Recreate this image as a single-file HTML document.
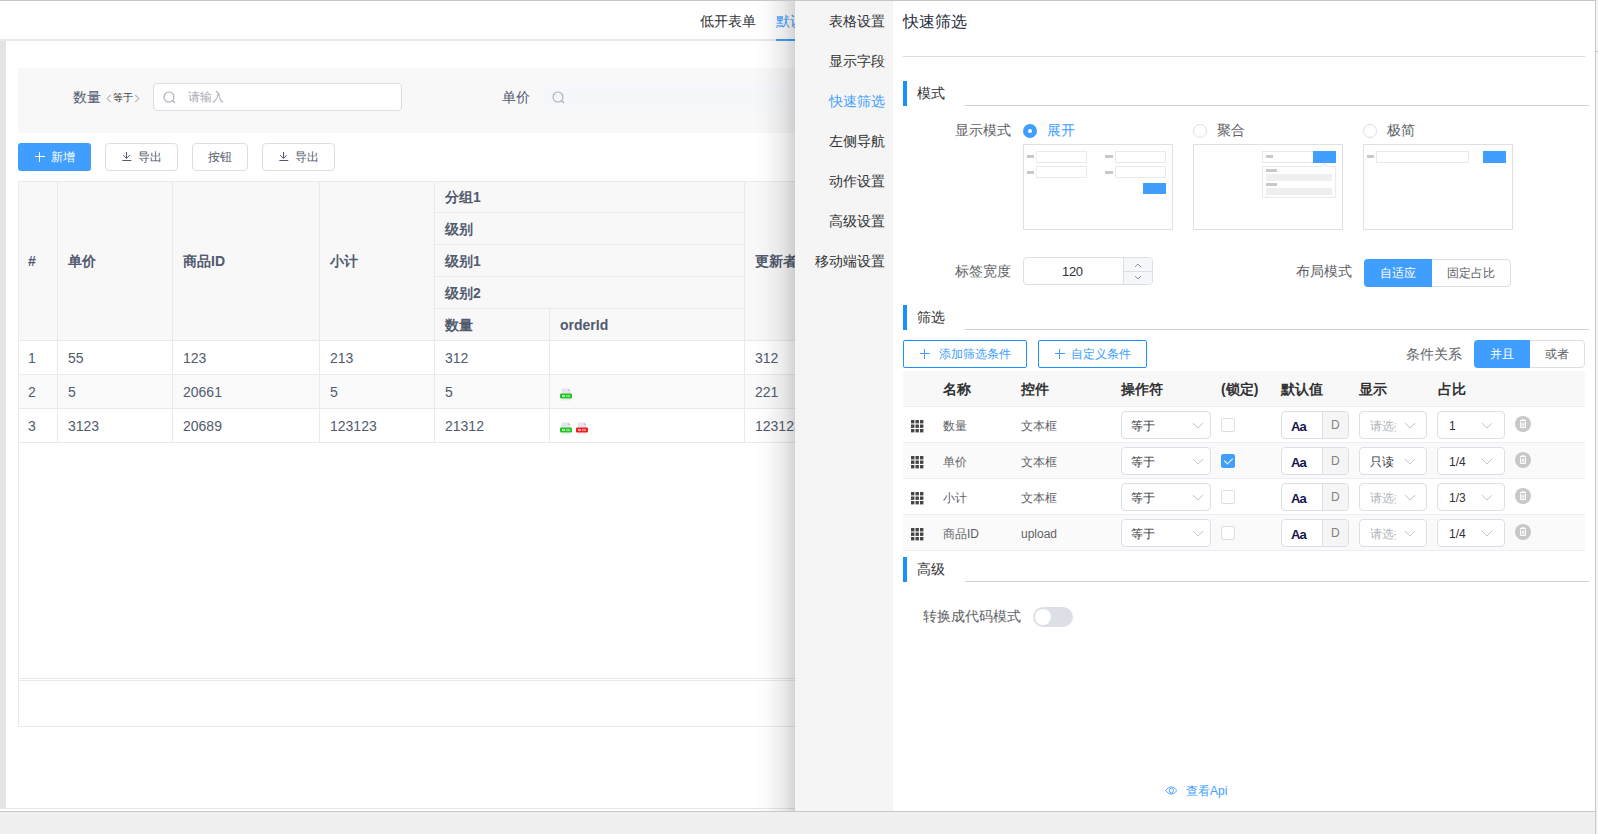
<!DOCTYPE html>
<html><head><meta charset="utf-8">
<style>
*{box-sizing:border-box;margin:0;padding:0}
html,body{width:1598px;height:834px;overflow:hidden;background:#fff;font-family:"Liberation Sans",sans-serif;color:#606266}
.a{position:absolute;white-space:nowrap}
.t{position:absolute;white-space:nowrap;line-height:20px}
/* left page */
.th{font-weight:bold;color:#515a6e;font-size:14px}
.td{color:#515a6e;font-size:14px}
.vl{position:absolute;width:1px;background:#e8eaec}
.hl{position:absolute;height:1px;background:#e8eaec}
.btn{position:absolute;height:28px;border:1px solid #dcdee2;border-radius:4px;background:#fff;font-size:12px;color:#515a6e}
.th2{font-weight:bold;color:#303133;font-size:14px}
.grip{width:12px;height:12px;display:grid;grid-template-columns:repeat(3,3px);grid-template-rows:repeat(3,3px);gap:1.5px}
.grip i{display:block;background:#444;width:3px;height:3px}
.sel{height:28px;border:1px solid #dcdfe6;border-radius:4px;background:#fff}
.cb{width:14px;height:14px;border:1px solid #dcdfe6;border-radius:2px;background:#fff}
.cb.on{background:#409eff;border-color:#409eff}
.cb.on::after{content:"";position:absolute;left:3.5px;top:1px;width:4px;height:7px;border:solid #fff;border-width:0 1.5px 1.5px 0;transform:rotate(45deg)}
.aa{font-size:13px;font-weight:bold;color:#141450;letter-spacing:-0.8px}
</style></head><body>
<div id="page">
  <!-- window top border -->
  <div class="a" style="left:0;top:0;width:1598px;height:1px;background:#c6c6c6"></div>
  <!-- tabs -->
  <div class="t" style="left:700px;top:11px;font-size:14px;color:#303133">低开表单</div>
  <div class="t" style="left:776px;top:11px;font-size:14px;color:#409eff">默认</div>
  <div class="a" style="left:0;top:39px;width:395px;height:2px;background:#ece8e8"></div>
  <div class="a" style="left:395px;top:39px;width:400px;height:2px;background:#e4e7ed"></div>
  <div class="a" style="left:776px;top:39px;width:20px;height:2px;background:#409eff"></div>
  <div class="a" style="left:0;top:41px;width:6px;height:767px;background:#e4e4e4"></div>

  <!-- search area -->
  <div class="a" style="left:18px;top:68px;width:780px;height:65px;background:#f8f8f9"></div>
  <div class="t" style="left:73px;top:87px;font-size:14px;color:#515a6e">数量</div>
  <svg class="a" style="left:106px;top:94px" width="6" height="9" viewBox="0 0 6 9"><path d="M4.8 0.8 L1.2 4.5 L4.8 8.2" fill="none" stroke="#888" stroke-width="0.9"/></svg>
  <div class="t" style="left:113px;top:88px;font-size:10px;line-height:20px;color:#333">等于</div>
  <svg class="a" style="left:134px;top:94px" width="6" height="9" viewBox="0 0 6 9"><path d="M1.2 0.8 L4.8 4.5 L1.2 8.2" fill="none" stroke="#888" stroke-width="0.9"/></svg>
  <div class="a" style="left:153px;top:83px;width:249px;height:28px;border:1px solid #dcdee2;border-radius:4px;background:#fff"></div>
  <svg class="a" style="left:163px;top:91px" width="13" height="13" viewBox="0 0 13 13"><circle cx="6" cy="6" r="5" fill="none" stroke="#a8abb2" stroke-width="1.1"/><path d="M9.6 9.6 L12 12" stroke="#a8abb2" stroke-width="1.1"/></svg>
  <div class="t" style="left:188px;top:87px;font-size:12px;color:#a8abb2">请输入</div>
  <div class="t" style="left:502px;top:87px;font-size:14px;color:#515a6e">单价</div>
  <div class="a" style="left:542px;top:83px;width:260px;height:28px;border-radius:4px;background:#f5f7fa"></div>
  <svg class="a" style="left:552px;top:91px" width="13" height="13" viewBox="0 0 13 13"><circle cx="6" cy="6" r="5" fill="none" stroke="#a8abb2" stroke-width="1.1"/><path d="M9.6 9.6 L12 12" stroke="#a8abb2" stroke-width="1.1"/></svg>

  <!-- buttons -->
  <div class="a" style="left:18px;top:143px;width:73px;height:28px;border-radius:3px;background:#409eff"></div>
  <svg class="a" style="left:35px;top:152px" width="10" height="10" viewBox="0 0 10 10"><path d="M4.5 0 V10 M0 4.5 H10" stroke="#fff" stroke-width="1"/></svg>
  <div class="t" style="left:51px;top:147px;font-size:12px;color:#fff">新增</div>
  <div class="btn" style="left:105px;top:143px;width:73px"></div>
  <svg class="a" style="left:122px;top:151px" width="10" height="11" viewBox="0 0 10 11"><path d="M4.5 1 V7.3 M1.3 4.2 L4.5 7.4 L7.7 4.2 M0.3 9.5 H9.3" fill="none" stroke="#515a6e" stroke-width="1"/></svg>
  <div class="t" style="left:138px;top:147px;font-size:12px;color:#515a6e">导出</div>
  <div class="btn" style="left:192px;top:143px;width:56px"></div>
  <div class="t" style="left:208px;top:147px;font-size:12px;color:#515a6e">按钮</div>
  <div class="btn" style="left:262px;top:143px;width:73px"></div>
  <svg class="a" style="left:279px;top:151px" width="10" height="11" viewBox="0 0 10 11"><path d="M4.5 1 V7.3 M1.3 4.2 L4.5 7.4 L7.7 4.2 M0.3 9.5 H9.3" fill="none" stroke="#515a6e" stroke-width="1"/></svg>
  <div class="t" style="left:295px;top:147px;font-size:12px;color:#515a6e">导出</div>

  <!-- table -->
  <div class="a" style="left:18px;top:181px;width:780px;height:160px;background:#f8f8f9"></div>
  <div class="a" style="left:18px;top:341px;width:780px;height:34px;background:#fff"></div>
  <div class="a" style="left:18px;top:375px;width:780px;height:34px;background:#fafafa"></div>
  <div class="hl" style="left:18px;top:181px;width:780px"></div>
  <div class="hl" style="left:434px;top:212px;width:310px"></div>
  <div class="hl" style="left:434px;top:244px;width:310px"></div>
  <div class="hl" style="left:434px;top:276px;width:310px"></div>
  <div class="hl" style="left:434px;top:308px;width:310px"></div>
  <div class="hl" style="left:18px;top:340px;width:780px"></div>
  <div class="hl" style="left:18px;top:374px;width:780px"></div>
  <div class="hl" style="left:18px;top:408px;width:780px"></div>
  <div class="hl" style="left:18px;top:442px;width:780px"></div>
  <div class="hl" style="left:18px;top:678px;width:780px"></div>
  <div class="hl" style="left:18px;top:680px;width:780px"></div>
  <div class="hl" style="left:18px;top:726px;width:780px"></div>
  <div class="vl" style="left:18px;top:181px;height:546px"></div>
  <div class="vl" style="left:57px;top:181px;height:262px"></div>
  <div class="vl" style="left:172px;top:181px;height:262px"></div>
  <div class="vl" style="left:319px;top:181px;height:262px"></div>
  <div class="vl" style="left:434px;top:181px;height:262px"></div>
  <div class="vl" style="left:549px;top:308px;height:135px"></div>
  <div class="vl" style="left:744px;top:181px;height:262px"></div>

  <div class="t th" style="left:28px;top:251px">#</div>
  <div class="t th" style="left:68px;top:251px">单价</div>
  <div class="t th" style="left:183px;top:251px">商品ID</div>
  <div class="t th" style="left:330px;top:251px">小计</div>
  <div class="t th" style="left:445px;top:187px">分组1</div>
  <div class="t th" style="left:445px;top:219px">级别</div>
  <div class="t th" style="left:445px;top:251px">级别1</div>
  <div class="t th" style="left:445px;top:283px">级别2</div>
  <div class="t th" style="left:445px;top:315px">数量</div>
  <div class="t th" style="left:560px;top:315px">orderId</div>
  <div class="t th" style="left:755px;top:251px">更新者</div>

  <div class="t td" style="left:28px;top:348px">1</div>
  <div class="t td" style="left:68px;top:348px">55</div>
  <div class="t td" style="left:183px;top:348px">123</div>
  <div class="t td" style="left:330px;top:348px">213</div>
  <div class="t td" style="left:445px;top:348px">312</div>
  <div class="t td" style="left:755px;top:348px">312</div>
  <div class="t td" style="left:28px;top:382px">2</div>
  <div class="t td" style="left:68px;top:382px">5</div>
  <div class="t td" style="left:183px;top:382px">20661</div>
  <div class="t td" style="left:330px;top:382px">5</div>
  <div class="t td" style="left:445px;top:382px">5</div>
  <div class="t td" style="left:755px;top:382px">221</div>
  <div class="t td" style="left:28px;top:416px">3</div>
  <div class="t td" style="left:68px;top:416px">3123</div>
  <div class="t td" style="left:183px;top:416px">20689</div>
  <div class="t td" style="left:330px;top:416px">123123</div>
  <div class="t td" style="left:445px;top:416px">21312</div>
  <div class="t td" style="left:755px;top:416px">123123</div>


  <svg class="a" style="left:560px;top:388px" width="12" height="13" viewBox="0 0 12 13"><path d="M1.5 0.5 H8 L10.5 3 V6 H1.5 Z" fill="#e4e5ec"/><path d="M8 0.5 L10.5 3 H8 Z" fill="#c5c6d0"/><rect x="0" y="5.5" width="12" height="5" rx="1" fill="#25c425"/><path d="M2.2 8 H5 M6.2 8 H7.5 M8.3 8 H9.8" stroke="#fff" stroke-width="1.3" opacity="0.85"/><path d="M1.5 11.8 H10.5" stroke="#dcdde5" stroke-width="0.8"/></svg>
  <svg class="a" style="left:560px;top:422px" width="12" height="13" viewBox="0 0 12 13"><path d="M1.5 0.5 H8 L10.5 3 V6 H1.5 Z" fill="#e4e5ec"/><path d="M8 0.5 L10.5 3 H8 Z" fill="#c5c6d0"/><rect x="0" y="5.5" width="12" height="5" rx="1" fill="#25c425"/><path d="M2.2 8 H5 M6.2 8 H7.5 M8.3 8 H9.8" stroke="#fff" stroke-width="1.3" opacity="0.85"/><path d="M1.5 11.8 H10.5" stroke="#dcdde5" stroke-width="0.8"/></svg>
  <svg class="a" style="left:576px;top:422px" width="12" height="13" viewBox="0 0 12 13"><path d="M1.5 0.5 H8 L10.5 3 V6 H1.5 Z" fill="#e4e5ec"/><path d="M8 0.5 L10.5 3 H8 Z" fill="#c5c6d0"/><rect x="0" y="5.5" width="12" height="5" rx="1" fill="#f01e1e"/><path d="M2.2 8 H5 M6.2 8 H7.5 M8.3 8 H9.8" stroke="#fff" stroke-width="1.3" opacity="0.85"/><path d="M1.5 11.8 H10.5" stroke="#dcdde5" stroke-width="0.8"/></svg>
  <!-- bottom -->
  <div class="a" style="left:0;top:808px;width:1598px;height:1px;background:#e6e6e6"></div>
  <div class="a" style="left:0;top:811px;width:1598px;height:1px;background:#c8c8c8"></div>
  <div class="a" style="left:0;top:812px;width:1598px;height:22px;background:#f0f0f0"></div>
</div>

<!-- DRAWER -->
<div id="drawer">
  <div class="a" style="left:755px;top:1px;width:40px;height:810px;background:linear-gradient(to right,rgba(0,0,0,0),rgba(0,0,0,0.02) 30%,rgba(0,0,0,0.08) 70%,rgba(0,0,0,0.17))"></div>
  <div class="a" style="left:795px;top:1px;width:98px;height:810px;background:#f5f5f5"></div>
  <div class="a" style="left:893px;top:1px;width:702px;height:810px;background:#fff"></div>
  <div class="a" style="left:1595px;top:0;width:1px;height:834px;background:#c8c8c8"></div>
  <div class="a" style="left:1596px;top:0;width:2px;height:834px;background:#f3f3f3"></div>
  <div class="a" style="left:1596px;top:51px;width:2px;height:1px;background:#c8c8c8"></div>
  <!-- nav -->
  <div class="t" style="left:829px;top:11px;font-size:14px;color:#303133">表格设置</div>
  <div class="t" style="left:829px;top:51px;font-size:14px;color:#303133">显示字段</div>
  <div class="t" style="left:829px;top:91px;font-size:14px;color:#409eff">快速筛选</div>
  <div class="t" style="left:829px;top:131px;font-size:14px;color:#303133">左侧导航</div>
  <div class="t" style="left:829px;top:171px;font-size:14px;color:#303133">动作设置</div>
  <div class="t" style="left:829px;top:211px;font-size:14px;color:#303133">高级设置</div>
  <div class="t" style="left:815px;top:251px;font-size:14px;color:#303133">移动端设置</div>
  <!-- title -->
  <div class="t" style="left:903px;top:11px;font-size:16px;line-height:22px;color:#1f2d3d">快速筛选</div>
  <div class="a" style="left:903px;top:56px;width:682px;height:1px;background:#dcdfe6"></div>
  <!-- section mode -->
  <div class="a" style="left:903px;top:81px;width:4px;height:25px;background:#1890ff"></div>
  <div class="t" style="left:917px;top:83px;font-size:14px;color:#303133">模式</div>
  <div class="a" style="left:965px;top:105px;width:624px;height:1px;background:#d0d0d0"></div>
  <div class="t" style="left:955px;top:120px;font-size:14px;color:#606266">显示模式</div>
  <!-- radios -->
  <div class="a" style="left:1023px;top:124px;width:14px;height:14px;border-radius:50%;background:#409eff"></div>
  <div class="a" style="left:1028px;top:129px;width:4px;height:4px;border-radius:50%;background:#fff"></div>
  <div class="t" style="left:1047px;top:120px;font-size:14px;color:#409eff">展开</div>
  <div class="a" style="left:1193px;top:124px;width:14px;height:14px;border-radius:50%;border:1px solid #dcdfe6;background:#fff"></div>
  <div class="t" style="left:1217px;top:120px;font-size:14px;color:#606266">聚合</div>
  <div class="a" style="left:1363px;top:124px;width:14px;height:14px;border-radius:50%;border:1px solid #dcdfe6;background:#fff"></div>
  <div class="t" style="left:1387px;top:120px;font-size:14px;color:#606266">极简</div>
  <!-- card1 -->
  <div class="a" style="left:1023px;top:144px;width:150px;height:86px;border:1px solid #e0e0e0;background:#fff"></div>
  <div class="a" style="left:1027px;top:155px;width:7px;height:3px;background:#c8c8c8"></div>
  <div class="a" style="left:1036px;top:151px;width:51px;height:12px;border:1px solid #eaeaea"></div>
  <div class="a" style="left:1027px;top:171px;width:7px;height:3px;background:#c8c8c8"></div>
  <div class="a" style="left:1036px;top:166px;width:51px;height:12px;border:1px solid #eaeaea"></div>
  <div class="a" style="left:1105px;top:155px;width:8px;height:3px;background:#c8c8c8"></div>
  <div class="a" style="left:1115px;top:151px;width:51px;height:12px;border:1px solid #eaeaea"></div>
  <div class="a" style="left:1105px;top:171px;width:8px;height:3px;background:#c8c8c8"></div>
  <div class="a" style="left:1115px;top:166px;width:51px;height:12px;border:1px solid #eaeaea"></div>
  <div class="a" style="left:1143px;top:183px;width:23px;height:11px;background:#409eff"></div>
  <!-- card2 -->
  <div class="a" style="left:1193px;top:144px;width:150px;height:86px;border:1px solid #e0e0e0;background:#fff"></div>
  <div class="a" style="left:1262px;top:151px;width:74px;height:12px;border:1px solid #eaeaea"></div>
  <div class="a" style="left:1266px;top:155px;width:7px;height:3px;background:#c8c8c8"></div>
  <div class="a" style="left:1313px;top:151px;width:23px;height:12px;background:#409eff"></div>
  <div class="a" style="left:1262px;top:166px;width:74px;height:32px;border:1px solid #eaeaea"></div>
  <div class="a" style="left:1322px;top:164px;width:5px;height:5px;border-left:1px solid #eaeaea;border-top:1px solid #eaeaea;background:#fff;transform:rotate(45deg)"></div>
  <div class="a" style="left:1266px;top:169px;width:11px;height:3px;background:#c8c8c8"></div>
  <div class="a" style="left:1266px;top:174px;width:66px;height:7px;background:#efefef"></div>
  <div class="a" style="left:1266px;top:183px;width:11px;height:3px;background:#c8c8c8"></div>
  <div class="a" style="left:1266px;top:188px;width:66px;height:7px;background:#efefef"></div>
  <!-- card3 -->
  <div class="a" style="left:1363px;top:144px;width:150px;height:86px;border:1px solid #e0e0e0;background:#fff"></div>
  <div class="a" style="left:1367px;top:155px;width:7px;height:3px;background:#c8c8c8"></div>
  <div class="a" style="left:1376px;top:151px;width:93px;height:12px;border:1px solid #eaeaea"></div>
  <div class="a" style="left:1483px;top:151px;width:23px;height:12px;background:#409eff"></div>

  <!-- label width -->
  <div class="t" style="left:955px;top:261px;font-size:14px;color:#606266">标签宽度</div>
  <div class="a" style="left:1023px;top:257px;width:130px;height:28px;border:1px solid #dcdfe6;border-radius:4px;background:#fff"></div>
  <div class="a" style="left:1123px;top:258px;width:29px;height:26px;border-left:1px solid #dcdfe6;background:#f5f7fa;border-radius:0 3px 3px 0"></div>
  <div class="a" style="left:1124px;top:271px;width:28px;height:1px;background:#dcdfe6"></div>
  <div class="t" style="left:1062px;top:262px;font-size:13px;color:#303133;letter-spacing:-0.3px">120</div>
  <svg class="a" style="left:1133px;top:261px" width="10" height="20" viewBox="0 0 10 20"><path d="M2 6 L5 3 L8 6" fill="none" stroke="#909399" stroke-width="1"/><path d="M2 15 L5 18 L8 15" fill="none" stroke="#909399" stroke-width="1"/></svg>
  <!-- layout mode -->
  <div class="t" style="left:1296px;top:261px;font-size:14px;color:#606266">布局模式</div>
  <div class="a" style="left:1364px;top:259px;width:147px;height:28px;border:1px solid #dcdfe6;border-radius:4px;background:#fff"></div>
  <div class="a" style="left:1364px;top:259px;width:68px;height:28px;border-radius:4px 0 0 4px;background:#409eff"></div>
  <div class="t" style="left:1380px;top:263px;font-size:12px;color:#fff">自适应</div>
  <div class="t" style="left:1447px;top:263px;font-size:12px;color:#606266">固定占比</div>

  <!-- section filter -->
  <div class="a" style="left:903px;top:305px;width:4px;height:25px;background:#1890ff"></div>
  <div class="t" style="left:917px;top:307px;font-size:14px;color:#303133">筛选</div>
  <div class="a" style="left:965px;top:329px;width:624px;height:1px;background:#d0d0d0"></div>
  <div class="a" style="left:903px;top:340px;width:124px;height:28px;border:1px solid #1e90ff;border-radius:2px;background:#fff"></div>
  <svg class="a" style="left:920px;top:349px" width="10" height="10" viewBox="0 0 10 10"><path d="M4.5 0 V10 M0 4.5 H10" stroke="#409eff" stroke-width="1"/></svg>
  <div class="t" style="left:939px;top:344px;font-size:12px;color:#409eff">添加筛选条件</div>
  <div class="a" style="left:1038px;top:340px;width:109px;height:28px;border:1px solid #1e90ff;border-radius:2px;background:#fff"></div>
  <svg class="a" style="left:1055px;top:349px" width="10" height="10" viewBox="0 0 10 10"><path d="M4.5 0 V10 M0 4.5 H10" stroke="#409eff" stroke-width="1"/></svg>
  <div class="t" style="left:1071px;top:344px;font-size:12px;color:#409eff">自定义条件</div>
  <div class="t" style="left:1406px;top:344px;font-size:14px;color:#606266">条件关系</div>
  <div class="a" style="left:1474px;top:340px;width:111px;height:28px;border:1px solid #dcdfe6;border-radius:4px;background:#fff"></div>
  <div class="a" style="left:1474px;top:340px;width:56px;height:28px;border-radius:4px 0 0 4px;background:#409eff"></div>
  <div class="t" style="left:1490px;top:344px;font-size:12px;color:#fff">并且</div>
  <div class="t" style="left:1545px;top:344px;font-size:12px;color:#606266">或者</div>

  <!-- filter table -->
  <div class="a" style="left:903px;top:371px;width:682px;height:36px;background:#f8f8f8"></div>
  <div class="a" style="left:903px;top:442px;width:682px;height:36px;background:#fafafa"></div>
  <div class="a" style="left:903px;top:514px;width:682px;height:36px;background:#fafafa"></div>
  <div class="a" style="left:903px;top:406px;width:682px;height:1px;background:#ebeef5"></div>
  <div class="a" style="left:903px;top:442px;width:682px;height:1px;background:#ebeef5"></div>
  <div class="a" style="left:903px;top:478px;width:682px;height:1px;background:#ebeef5"></div>
  <div class="a" style="left:903px;top:514px;width:682px;height:1px;background:#ebeef5"></div>
  <div class="a" style="left:903px;top:550px;width:682px;height:1px;background:#ebeef5"></div>
  <div class="t th2" style="left:943px;top:379px">名称</div>
  <div class="t th2" style="left:1021px;top:379px">控件</div>
  <div class="t th2" style="left:1121px;top:379px">操作符</div>
  <div class="t th2" style="left:1221px;top:379px">(锁定)</div>
  <div class="t th2" style="left:1281px;top:379px">默认值</div>
  <div class="t th2" style="left:1359px;top:379px">显示</div>
  <div class="t th2" style="left:1438px;top:379px">占比</div>
  
  <svg class="a" style="left:911px;top:420px" width="13" height="13" viewBox="0 0 13 13" fill="#454545"><rect x="0.0" y="0.0" width="3.4" height="3.4"/><rect x="4.5" y="0.0" width="3.4" height="3.4"/><rect x="9.0" y="0.0" width="3.4" height="3.4"/><rect x="0.0" y="4.5" width="3.4" height="3.4"/><rect x="4.5" y="4.5" width="3.4" height="3.4"/><rect x="9.0" y="4.5" width="3.4" height="3.4"/><rect x="0.0" y="9.0" width="3.4" height="3.4"/><rect x="4.5" y="9.0" width="3.4" height="3.4"/><rect x="9.0" y="9.0" width="3.4" height="3.4"/></svg>
  <div class="t" style="left:943px;top:416px;font-size:12px;color:#606266">数量</div>
  <div class="t" style="left:1021px;top:416px;font-size:12px;color:#606266">文本框</div>
  <div class="a sel" style="left:1121px;top:411px;width:90px"></div>
  <div class="t" style="left:1131px;top:416px;font-size:12px;color:#303133">等于</div>
  <svg class="a" style="left:1192px;top:422px" width="12" height="7" viewBox="0 0 12 7"><path d="M1 1 L6 6 L11 1" fill="none" stroke="#c0c4cc" stroke-width="1"/></svg>
  <div class="a cb" style="left:1221px;top:418px"></div>
  <div class="a sel" style="left:1281px;top:411px;width:68px"></div>
  <div class="a" style="left:1322px;top:412px;width:26px;height:26px;border-left:1px solid #dcdfe6;background:#f5f5f5;border-radius:0 3px 3px 0"></div>
  <div class="t aa" style="left:1291px;top:417px">Aa</div>
  <div class="t" style="left:1331px;top:415px;font-size:12px;color:#808080">D</div>
  <div class="a sel" style="left:1359px;top:411px;width:68px;overflow:hidden"></div>
  <div class="t" style="left:1370px;top:416px;font-size:12px;color:#b0b3b8;width:26px;overflow:hidden">请选择</div>
  <svg class="a" style="left:1404px;top:422px" width="12" height="7" viewBox="0 0 12 7"><path d="M1 1 L6 6 L11 1" fill="none" stroke="#c0c4cc" stroke-width="1"/></svg>
  <div class="a sel" style="left:1437px;top:411px;width:68px"></div>
  <div class="t" style="left:1449px;top:416px;font-size:12px;color:#303133">1</div>
  <svg class="a" style="left:1481px;top:422px" width="12" height="7" viewBox="0 0 12 7"><path d="M1 1 L6 6 L11 1" fill="none" stroke="#c0c4cc" stroke-width="1"/></svg>
  <svg class="a" style="left:1515px;top:416px" width="16" height="16" viewBox="0 0 16 16"><circle cx="8" cy="8" r="8" fill="#c8c8c8"/><path d="M5 4.5 H11 M6.5 4.5 V3.8 H9.5 V4.5 M5.5 5.5 V11.5 H10.5 V5.5 M7.2 6.5 V10.5 M8.8 6.5 V10.5" fill="none" stroke="#fff" stroke-width="1"/></svg>
  <svg class="a" style="left:911px;top:456px" width="13" height="13" viewBox="0 0 13 13" fill="#454545"><rect x="0.0" y="0.0" width="3.4" height="3.4"/><rect x="4.5" y="0.0" width="3.4" height="3.4"/><rect x="9.0" y="0.0" width="3.4" height="3.4"/><rect x="0.0" y="4.5" width="3.4" height="3.4"/><rect x="4.5" y="4.5" width="3.4" height="3.4"/><rect x="9.0" y="4.5" width="3.4" height="3.4"/><rect x="0.0" y="9.0" width="3.4" height="3.4"/><rect x="4.5" y="9.0" width="3.4" height="3.4"/><rect x="9.0" y="9.0" width="3.4" height="3.4"/></svg>
  <div class="t" style="left:943px;top:452px;font-size:12px;color:#606266">单价</div>
  <div class="t" style="left:1021px;top:452px;font-size:12px;color:#606266">文本框</div>
  <div class="a sel" style="left:1121px;top:447px;width:90px"></div>
  <div class="t" style="left:1131px;top:452px;font-size:12px;color:#303133">等于</div>
  <svg class="a" style="left:1192px;top:458px" width="12" height="7" viewBox="0 0 12 7"><path d="M1 1 L6 6 L11 1" fill="none" stroke="#c0c4cc" stroke-width="1"/></svg>
  <div class="a cb on" style="left:1221px;top:454px"></div>
  <div class="a sel" style="left:1281px;top:447px;width:68px"></div>
  <div class="a" style="left:1322px;top:448px;width:26px;height:26px;border-left:1px solid #dcdfe6;background:#f5f5f5;border-radius:0 3px 3px 0"></div>
  <div class="t aa" style="left:1291px;top:453px">Aa</div>
  <div class="t" style="left:1331px;top:451px;font-size:12px;color:#808080">D</div>
  <div class="a sel" style="left:1359px;top:447px;width:68px;overflow:hidden"></div>
  <div class="t" style="left:1370px;top:452px;font-size:12px;color:#303133;width:26px;overflow:hidden">只读</div>
  <svg class="a" style="left:1404px;top:458px" width="12" height="7" viewBox="0 0 12 7"><path d="M1 1 L6 6 L11 1" fill="none" stroke="#c0c4cc" stroke-width="1"/></svg>
  <div class="a sel" style="left:1437px;top:447px;width:68px"></div>
  <div class="t" style="left:1449px;top:452px;font-size:12px;color:#303133">1/4</div>
  <svg class="a" style="left:1481px;top:458px" width="12" height="7" viewBox="0 0 12 7"><path d="M1 1 L6 6 L11 1" fill="none" stroke="#c0c4cc" stroke-width="1"/></svg>
  <svg class="a" style="left:1515px;top:452px" width="16" height="16" viewBox="0 0 16 16"><circle cx="8" cy="8" r="8" fill="#c8c8c8"/><path d="M5 4.5 H11 M6.5 4.5 V3.8 H9.5 V4.5 M5.5 5.5 V11.5 H10.5 V5.5 M7.2 6.5 V10.5 M8.8 6.5 V10.5" fill="none" stroke="#fff" stroke-width="1"/></svg>
  <svg class="a" style="left:911px;top:492px" width="13" height="13" viewBox="0 0 13 13" fill="#454545"><rect x="0.0" y="0.0" width="3.4" height="3.4"/><rect x="4.5" y="0.0" width="3.4" height="3.4"/><rect x="9.0" y="0.0" width="3.4" height="3.4"/><rect x="0.0" y="4.5" width="3.4" height="3.4"/><rect x="4.5" y="4.5" width="3.4" height="3.4"/><rect x="9.0" y="4.5" width="3.4" height="3.4"/><rect x="0.0" y="9.0" width="3.4" height="3.4"/><rect x="4.5" y="9.0" width="3.4" height="3.4"/><rect x="9.0" y="9.0" width="3.4" height="3.4"/></svg>
  <div class="t" style="left:943px;top:488px;font-size:12px;color:#606266">小计</div>
  <div class="t" style="left:1021px;top:488px;font-size:12px;color:#606266">文本框</div>
  <div class="a sel" style="left:1121px;top:483px;width:90px"></div>
  <div class="t" style="left:1131px;top:488px;font-size:12px;color:#303133">等于</div>
  <svg class="a" style="left:1192px;top:494px" width="12" height="7" viewBox="0 0 12 7"><path d="M1 1 L6 6 L11 1" fill="none" stroke="#c0c4cc" stroke-width="1"/></svg>
  <div class="a cb" style="left:1221px;top:490px"></div>
  <div class="a sel" style="left:1281px;top:483px;width:68px"></div>
  <div class="a" style="left:1322px;top:484px;width:26px;height:26px;border-left:1px solid #dcdfe6;background:#f5f5f5;border-radius:0 3px 3px 0"></div>
  <div class="t aa" style="left:1291px;top:489px">Aa</div>
  <div class="t" style="left:1331px;top:487px;font-size:12px;color:#808080">D</div>
  <div class="a sel" style="left:1359px;top:483px;width:68px;overflow:hidden"></div>
  <div class="t" style="left:1370px;top:488px;font-size:12px;color:#b0b3b8;width:26px;overflow:hidden">请选择</div>
  <svg class="a" style="left:1404px;top:494px" width="12" height="7" viewBox="0 0 12 7"><path d="M1 1 L6 6 L11 1" fill="none" stroke="#c0c4cc" stroke-width="1"/></svg>
  <div class="a sel" style="left:1437px;top:483px;width:68px"></div>
  <div class="t" style="left:1449px;top:488px;font-size:12px;color:#303133">1/3</div>
  <svg class="a" style="left:1481px;top:494px" width="12" height="7" viewBox="0 0 12 7"><path d="M1 1 L6 6 L11 1" fill="none" stroke="#c0c4cc" stroke-width="1"/></svg>
  <svg class="a" style="left:1515px;top:488px" width="16" height="16" viewBox="0 0 16 16"><circle cx="8" cy="8" r="8" fill="#c8c8c8"/><path d="M5 4.5 H11 M6.5 4.5 V3.8 H9.5 V4.5 M5.5 5.5 V11.5 H10.5 V5.5 M7.2 6.5 V10.5 M8.8 6.5 V10.5" fill="none" stroke="#fff" stroke-width="1"/></svg>
  <svg class="a" style="left:911px;top:528px" width="13" height="13" viewBox="0 0 13 13" fill="#454545"><rect x="0.0" y="0.0" width="3.4" height="3.4"/><rect x="4.5" y="0.0" width="3.4" height="3.4"/><rect x="9.0" y="0.0" width="3.4" height="3.4"/><rect x="0.0" y="4.5" width="3.4" height="3.4"/><rect x="4.5" y="4.5" width="3.4" height="3.4"/><rect x="9.0" y="4.5" width="3.4" height="3.4"/><rect x="0.0" y="9.0" width="3.4" height="3.4"/><rect x="4.5" y="9.0" width="3.4" height="3.4"/><rect x="9.0" y="9.0" width="3.4" height="3.4"/></svg>
  <div class="t" style="left:943px;top:524px;font-size:12px;color:#606266">商品ID</div>
  <div class="t" style="left:1021px;top:524px;font-size:12px;color:#606266">upload</div>
  <div class="a sel" style="left:1121px;top:519px;width:90px"></div>
  <div class="t" style="left:1131px;top:524px;font-size:12px;color:#303133">等于</div>
  <svg class="a" style="left:1192px;top:530px" width="12" height="7" viewBox="0 0 12 7"><path d="M1 1 L6 6 L11 1" fill="none" stroke="#c0c4cc" stroke-width="1"/></svg>
  <div class="a cb" style="left:1221px;top:526px"></div>
  <div class="a sel" style="left:1281px;top:519px;width:68px"></div>
  <div class="a" style="left:1322px;top:520px;width:26px;height:26px;border-left:1px solid #dcdfe6;background:#f5f5f5;border-radius:0 3px 3px 0"></div>
  <div class="t aa" style="left:1291px;top:525px">Aa</div>
  <div class="t" style="left:1331px;top:523px;font-size:12px;color:#808080">D</div>
  <div class="a sel" style="left:1359px;top:519px;width:68px;overflow:hidden"></div>
  <div class="t" style="left:1370px;top:524px;font-size:12px;color:#b0b3b8;width:26px;overflow:hidden">请选择</div>
  <svg class="a" style="left:1404px;top:530px" width="12" height="7" viewBox="0 0 12 7"><path d="M1 1 L6 6 L11 1" fill="none" stroke="#c0c4cc" stroke-width="1"/></svg>
  <div class="a sel" style="left:1437px;top:519px;width:68px"></div>
  <div class="t" style="left:1449px;top:524px;font-size:12px;color:#303133">1/4</div>
  <svg class="a" style="left:1481px;top:530px" width="12" height="7" viewBox="0 0 12 7"><path d="M1 1 L6 6 L11 1" fill="none" stroke="#c0c4cc" stroke-width="1"/></svg>
  <svg class="a" style="left:1515px;top:524px" width="16" height="16" viewBox="0 0 16 16"><circle cx="8" cy="8" r="8" fill="#c8c8c8"/><path d="M5 4.5 H11 M6.5 4.5 V3.8 H9.5 V4.5 M5.5 5.5 V11.5 H10.5 V5.5 M7.2 6.5 V10.5 M8.8 6.5 V10.5" fill="none" stroke="#fff" stroke-width="1"/></svg>

  <!-- advanced -->
  <div class="a" style="left:903px;top:557px;width:4px;height:25px;background:#1890ff"></div>
  <div class="t" style="left:917px;top:559px;font-size:14px;color:#303133">高级</div>
  <div class="a" style="left:965px;top:581px;width:624px;height:1px;background:#d0d0d0"></div>
  <div class="t" style="left:923px;top:606px;font-size:14px;color:#606266">转换成代码模式</div>
  <div class="a" style="left:1033px;top:607px;width:40px;height:20px;border-radius:10px;background:#dcdfe6"></div>
  <div class="a" style="left:1035px;top:609px;width:16px;height:16px;border-radius:50%;background:#fff"></div>
  <!-- api -->
  <svg class="a" style="left:1165px;top:786px" width="13" height="9" viewBox="0 0 13 9"><path d="M0.5 4.5 Q6.25 -2.8 12 4.5 Q6.25 11.8 0.5 4.5 Z" fill="none" stroke="#409eff" stroke-width="0.9"/><rect x="4.3" y="2.2" width="4" height="4.6" rx="1.8" fill="none" stroke="#409eff" stroke-width="0.9"/></svg>
  <div class="t" style="left:1186px;top:781px;font-size:12px;color:#409eff">查看Api</div>
</div>
</body></html>
